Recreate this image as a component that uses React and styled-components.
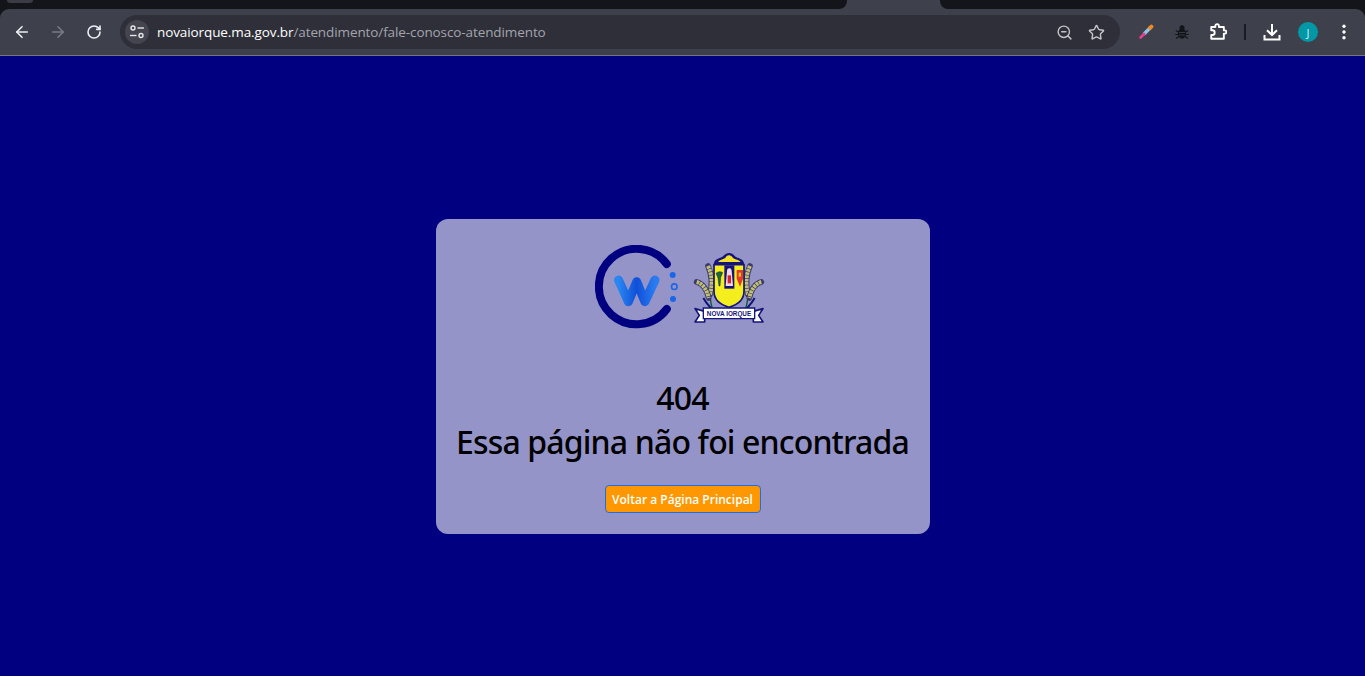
import React from 'react'
import styled, { createGlobalStyle } from 'styled-components'
import { ArrowLeft, ArrowRight, RotateCw, ZoomOut, Star } from 'lucide-react'

const GlobalStyle = createGlobalStyle`
  html, body { margin: 0; padding: 0; height: 100%; overflow: hidden; }
  body { font-family: "Open Sans", "Noto Sans", sans-serif; background: #000080; }
`

const Window = styled.div`
  display: flex;
  flex-direction: column;
  height: 676px;
`

const Chrome = styled.header`
  background: #14151a;
  flex: none;
`

const TabStrip = styled.div`
  display: flex;
  height: 9px;
  background: #3e404c;
`

const TabGap = styled.div`
  position: relative;
  flex: ${p => (p.$side === 'left' ? '0 0 847px' : '1')};
  background: #14151a;
  border-radius: ${p => (p.$side === 'left' ? '0 0 8px 0' : '0 0 0 8px')};
  margin-left: ${p => (p.$side === 'left' ? '0' : '93px')};
`

const OtherTab = styled.div`
  width: 26px;
  height: 3px;
  margin-left: 7px;
  background: #3a3b44;
  border-radius: 0 0 13px 13px;
`

const Toolbar = styled.div`
  display: flex;
  align-items: center;
  height: 46px;
  padding: 0 3px 0 4px;
  background: #3e404c;
  border-radius: 9px 9px 0 0;
  border-bottom: 1px solid #74757d;
`

const ToolButton = styled.div`
  display: flex;
  align-items: center;
  justify-content: center;
  flex: none;
  width: ${p => p.$width || 36}px;
  height: 34px;
  color: ${p => p.$color || '#eeeef2'};
`

const AddressBar = styled.div`
  display: flex;
  align-items: center;
  flex: 1;
  height: 34px;
  margin: 0 8px;
  padding: 0 8px 0 5px;
  background: #2e2f38;
  border-radius: 17px;
`

const SiteInfo = styled.div`
  display: flex;
  align-items: center;
  justify-content: center;
  flex: none;
  width: 24px;
  height: 24px;
  background: #44454f;
  border-radius: 50%;
  color: #e6e6ea;
`

const Url = styled.div`
  flex: 1;
  margin-left: 8px;
  font-size: 13.5px;
  letter-spacing: -0.1px;
  color: #a3a5ad;
  white-space: nowrap;
`

const Host = styled.span`
  color: #ffffff;
`

const DividerSlot = styled.div`
  display: flex;
  justify-content: center;
  flex: none;
  width: 18px;
`

const Divider = styled.div`
  width: 2px;
  height: 16px;
  background: #1a1b20;
`

const Avatar = styled.div`
  display: flex;
  align-items: center;
  justify-content: center;
  width: 20px;
  height: 20px;
  border-radius: 50%;
  background: #0097a7;
  color: #d9f3f5;
  font-size: 11px;
`

const Page = styled.main`
  flex: 1;
  display: flex;
  justify-content: center;
  align-items: flex-start;
  padding-top: 163px;
  background: #000080;
`

const Card = styled.section`
  display: flex;
  flex-direction: column;
  align-items: center;
  box-sizing: border-box;
  width: 494px;
  height: 315px;
  padding-top: 26px;
  background: #9494c8;
  border-radius: 12px;
`

const Logos = styled.div`
  display: flex;
  align-items: flex-start;
  gap: 7px;
  height: 85px;
`

const Crest = styled.svg`
  margin-top: 3px;
`

const Title = styled.h1`
  margin: 46px 0 0;
  font-family: "Noto Sans", "Open Sans", sans-serif;
  font-size: 32px;
  font-weight: 500;
  letter-spacing: -0.85px;
  line-height: 44px;
  color: #000000;
  text-align: center;
  white-space: nowrap;
`

const BackButton = styled.button`
  box-sizing: border-box;
  width: 156px;
  height: 28px;
  margin-top: 21px;
  padding: 0;
  background: #ff9800;
  border: 1px solid #1f6fe0;
  border-radius: 4px;
  color: #ffffff;
  font-family: inherit;
  font-size: 12px;
  font-weight: 600;
`

function TuneIcon() {
  return (
    <svg width="16" height="16" viewBox="0 0 16 16" fill="none" stroke="currentColor" strokeWidth="1.4">
      <circle cx="4" cy="4" r="2" />
      <path d="M8.5 4H15" />
      <path d="M1 11.5H7.5" />
      <circle cx="12" cy="11.5" r="2" />
    </svg>
  )
}

function EyedropperIcon() {
  return (
    <svg width="16" height="16" viewBox="0 0 16 16" fill="none" strokeLinecap="round">
      <path d="M11.5 4.5L13.4 2.6" stroke="#f08a24" strokeWidth="4" />
      <path d="M10 6L6.5 9.5" stroke="#8fc4e8" strokeWidth="3.4" />
      <path d="M6 10L2.6 13.4" stroke="#e83e8c" strokeWidth="2.8" />
    </svg>
  )
}

function BugIcon() {
  return (
    <svg width="16" height="16" viewBox="0 0 16 16" fill="none" stroke="#14151a" strokeWidth="1.2">
      <ellipse cx="8" cy="9.5" rx="3.6" ry="4.6" fill="#14151a" />
      <circle cx="8" cy="3.8" r="2" fill="#14151a" />
      <path d="M1.8 6.5L4.5 8M1.2 10.5H4.4M2 14.5L4.8 12.5M14.2 6.5L11.5 8M14.8 10.5H11.6M14 14.5L11.2 12.5" />
      <path d="M4.8 8.5H11.2M4.8 11H11.2" stroke="#3e404c" strokeWidth="0.8" />
    </svg>
  )
}

function PuzzleIcon() {
  return (
    <svg width="18" height="18" viewBox="0 0 20 20" fill="none" stroke="currentColor" strokeWidth="2.1" strokeLinejoin="round">
      <path d="M2.5 4.5H7V3.2a2 2 0 0 1 4 0V4.5h5.5V8.2h1a1.8 1.8 0 0 1 0 3.6h-1v5.7H2.5v-4.2h1.2a2.6 2.6 0 0 0 0-5.2H2.5Z" />
    </svg>
  )
}

function DownloadIcon() {
  return (
    <svg width="18" height="18" viewBox="0 0 18 18" fill="none" stroke="currentColor" strokeWidth="2">
      <path d="M9 1V11.5" />
      <path d="M4 7.2L9 12L14 7.2" />
      <path d="M1.5 12V16.5H16.5V12" />
    </svg>
  )
}

function MoreIcon() {
  return (
    <svg width="16" height="16" viewBox="0 0 16 16" fill="currentColor">
      <circle cx="8" cy="2.2" r="1.7" />
      <circle cx="8" cy="8" r="1.7" />
      <circle cx="8" cy="13.8" r="1.7" />
    </svg>
  )
}

function WLogo() {
  return (
    <svg width="88" height="85" viewBox="0 0 88 85" fill="none">
      <defs>
        <linearGradient id="wBlue" x1="0" y1="0" x2="1" y2="0">
          <stop offset="0" stopColor="#2a86f0" />
          <stop offset="0.5" stopColor="#0f4fd8" />
          <stop offset="1" stopColor="#2a7cf0" />
        </linearGradient>
      </defs>
      <path d="M71.8 19A37.7 37.7 0 1 0 71.8 64" stroke="#000080" strokeWidth="8" strokeLinecap="round" />
      <path d="M23.5 35L33.3 56.7L41.7 36.7L50 56.7L60 35" stroke="url(#wBlue)" strokeWidth="9" strokeLinecap="round" strokeLinejoin="round" />
      <circle cx="77.7" cy="30" r="3" fill="#1a66e8" />
      <circle cx="79.3" cy="41.7" r="2.8" stroke="#1a66e8" strokeWidth="1.6" />
      <circle cx="78" cy="54" r="3" fill="#1a66e8" />
    </svg>
  )
}

function Wheat({ flip }) {
  return (
    <g transform={flip ? 'translate(234 0) scale(-1 1)' : undefined}>
      <path d="M40 150C48 165 58 175 66 184" stroke="#14147a" strokeWidth="6" />
      <path d="M56 130C62 150 62 170 68 184" stroke="#0c5a2a" strokeWidth="4" />
      <path d="M54 54C66 80 68 105 60 140" stroke="#3a3a6e" strokeWidth="17" strokeLinecap="round" />
      <path d="M54 54C66 80 68 105 60 140" stroke="#c2bf72" strokeWidth="12" strokeDasharray="8 2" />
      <path d="M20 102C36 106 50 122 56 150" stroke="#3a3a6e" strokeWidth="17" strokeLinecap="round" />
      <path d="M20 102C36 106 50 122 56 150" stroke="#c2bf72" strokeWidth="12" strokeDasharray="8 2" />
    </g>
  )
}

function CityCrest() {
  return (
    <Crest width="81" height="80" viewBox="0 0 243 240" fill="none">
      <Wheat />
      <Wheat flip />
      <path d="M72 50C70 30 94 32 100 24C110 12 126 12 134 24C140 32 164 30 162 50Z" fill="#14147a" />
      <path d="M84 42C92 32 104 36 110 24C116 20 122 22 126 26C132 36 144 32 152 42Z" fill="#f2e22a" />
      <path d="M72 50H162V130Q162 165 117 178Q72 165 72 130Z" fill="#f5ee1e" stroke="#14147a" strokeWidth="5" />
      <path d="M103 52H133V122H103Z" fill="#14147a" />
      <path d="M111 68a7 7 0 0 1 14 0L129 114H107Z" fill="#f0d8e0" />
      <path d="M113 82h10v24h-10z" fill="#d8232a" />
      <path d="M78 76C84 70 94 70 98 74L92 88L90 114H87L84 90Z" fill="#1c6b35" stroke="#14147a" strokeWidth="1.5" />
      <path d="M140 66H159V92L150 116L140 92Z" fill="#e23a2a" />
      <path d="M146 74h7v12h-7z" fill="#f5c21e" />
      <path d="M15 182L44 190V222H15L28 202Z" fill="#ffffff" stroke="#14147a" strokeWidth="5" strokeLinejoin="round" />
      <path d="M219 182L190 190V222H219L206 202Z" fill="#ffffff" stroke="#14147a" strokeWidth="5" strokeLinejoin="round" />
      <path d="M40 180H194V212H40Z" fill="#ffffff" stroke="#14147a" strokeWidth="4" />
      <text x="117" y="203" fontFamily="Liberation Sans, sans-serif" fontSize="19" fontWeight="700" fill="#14147a" textAnchor="middle">NOVA IORQUE</text>
    </Crest>
  )
}

export default function App() {
  return (
    <>
      <GlobalStyle />
      <Window>
        <Chrome>
          <TabStrip>
            <TabGap $side="left"><OtherTab /></TabGap>
            <TabGap $side="right" />
          </TabStrip>
          <Toolbar>
            <ToolButton><ArrowLeft size={18} strokeWidth={2.2} /></ToolButton>
            <ToolButton $color="#7b7c84"><ArrowRight size={18} strokeWidth={2} /></ToolButton>
            <ToolButton><RotateCw size={16} strokeWidth={2.4} /></ToolButton>
            <AddressBar>
              <SiteInfo><TuneIcon /></SiteInfo>
              <Url><Host>novaiorque.ma.gov.br</Host>/atendimento/fale-conosco-atendimento</Url>
              <ToolButton $width={32} $color="#c4c5ca"><ZoomOut size={17} strokeWidth={2} /></ToolButton>
              <ToolButton $width={32} $color="#c4c5ca"><Star size={17} strokeWidth={2} /></ToolButton>
            </AddressBar>
            <ToolButton><EyedropperIcon /></ToolButton>
            <ToolButton><BugIcon /></ToolButton>
            <ToolButton $color="#ffffff"><PuzzleIcon /></ToolButton>
            <DividerSlot><Divider /></DividerSlot>
            <ToolButton $color="#ffffff"><DownloadIcon /></ToolButton>
            <ToolButton><Avatar>J</Avatar></ToolButton>
            <ToolButton $color="#ffffff"><MoreIcon /></ToolButton>
          </Toolbar>
        </Chrome>
        <Page>
          <Card>
            <Logos>
              <WLogo />
              <CityCrest />
            </Logos>
            <Title>404<br />Essa página não foi encontrada</Title>
            <BackButton type="button">Voltar a Página Principal</BackButton>
          </Card>
        </Page>
      </Window>
    </>
  )
}
